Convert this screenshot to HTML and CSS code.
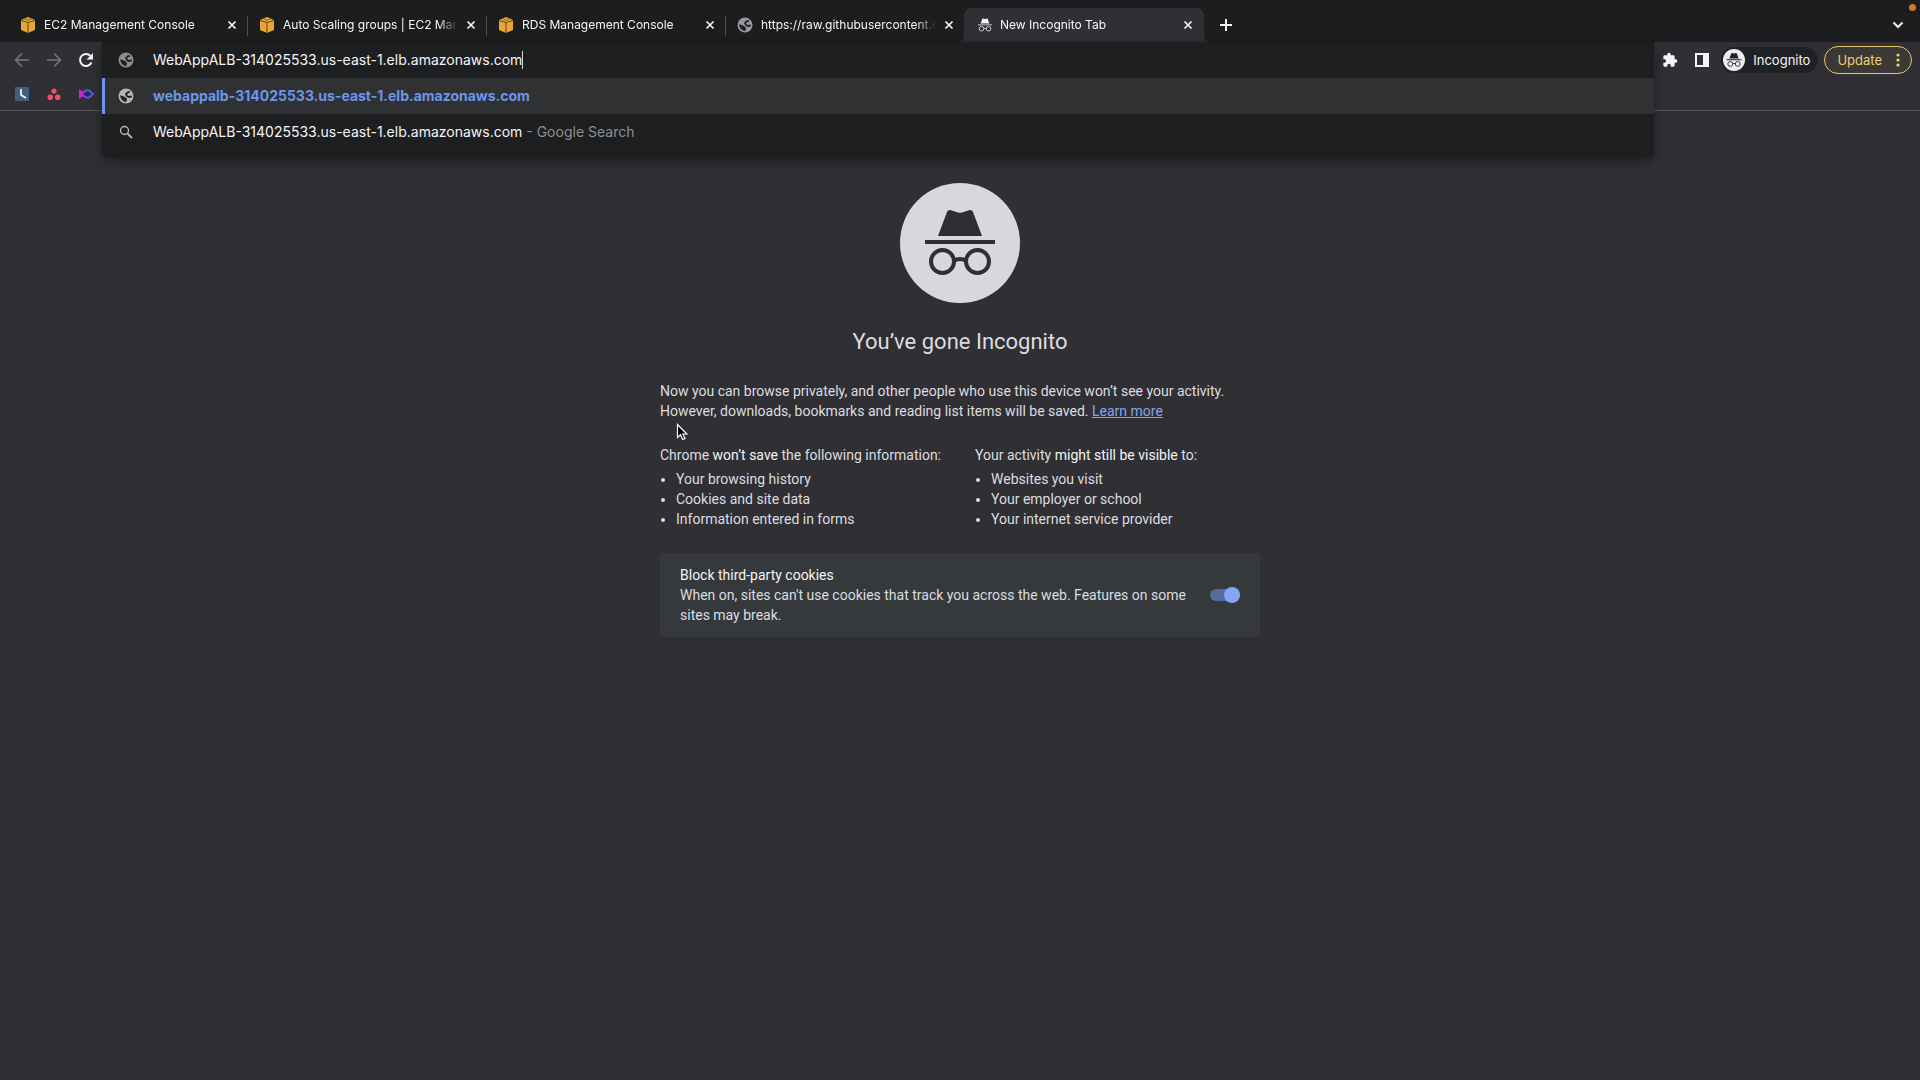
FILE: index.html
```html
<!DOCTYPE html>
<html lang="en">
<head>
<meta charset="utf-8">
<title>New Incognito Tab</title>
<link rel="stylesheet" href="styles.css">
</head>
<body>
<svg class="defs" aria-hidden="true">
  <symbol id="cube" viewBox="0 0 16 16">
    <path fill="#e8a636" d="M1 3l7-3 7 3v10l-7 3-7-3z"/>
    <path fill="none" stroke="#4a3414" stroke-width="1" d="M1 3.500l7 2 7-2M8 5.500V16" opacity=".85"/>
    <path fill="none" stroke="#7a5620" stroke-width=".8" d="M4 1.600l4 1.600 4-1.600"/>
  </symbol>
  <symbol id="globe" viewBox="0 0 16 16">
    <circle cx="8" cy="8" r="7.500" fill="currentColor"/>
    <path fill="none" stroke="#1e1f21" stroke-width="1.800" d="M11.800 3.600L9.600 4.400 8 6.200 9.200 8.300 11.200 9l2.600-.6"/>
    <path fill="#1e1f21" d="M2 7.200l4.600 1.600 2.400 2-.6 3.300Q3 13.500 2 7.200z"/>
  </symbol>
  <symbol id="close" viewBox="0 0 10 10">
    <path d="M1.500 1.500l7 7M8.500 1.500l-7 7" stroke="currentColor" stroke-width="1.700"/>
  </symbol>
  <symbol id="spy" viewBox="0 0 70 66">
    <path fill="currentColor" d="M13 26L22 2Q23 -.5 26 .3L33 2.500Q35 3 37 2.500L44 .3Q47 -.5 48 2L57 26zM0 30h70v4H0z"/>
    <g fill="none" stroke="currentColor" stroke-width="4"><circle cx="17.500" cy="51.500" r="11.500"/><circle cx="52.500" cy="51.500" r="11.500"/><path d="M28.500 51Q35 47 41.500 51"/></g>
  </symbol>
</svg>

<header class="browser">
  <nav class="tabs" aria-label="Tabs">
    <div class="tab"><svg class="icon"><use href="#cube"/></svg><span class="title">EC2 Management Console</span><button class="close" aria-label="Close tab"><svg><use href="#close"/></svg></button></div>
    <div class="tab"><svg class="icon"><use href="#cube"/></svg><span class="title">Auto Scaling groups | EC2 Management</span><button class="close" aria-label="Close tab"><svg><use href="#close"/></svg></button></div>
    <div class="tab"><svg class="icon"><use href="#cube"/></svg><span class="title">RDS Management Console</span><button class="close" aria-label="Close tab"><svg><use href="#close"/></svg></button></div>
    <div class="tab last"><svg class="icon muted"><use href="#globe"/></svg><span class="title">https://raw.githubusercontent.com</span><button class="close" aria-label="Close tab"><svg><use href="#close"/></svg></button></div>
    <div class="tab active"><svg class="icon spy"><use href="#spy"/></svg><span class="title">New Incognito Tab</span><button class="close" aria-label="Close tab"><svg><use href="#close"/></svg></button></div>
    <button class="new-tab" aria-label="New tab"><svg viewBox="0 0 14 14"><path d="M7 1v12M1 7h12" stroke="currentColor" stroke-width="2"/></svg></button>
    <button class="tab-search" aria-label="Search tabs"><svg viewBox="0 0 12 8"><path d="M1.500 1.500L6 6l4.500-4.500" fill="none" stroke="currentColor" stroke-width="2"/></svg></button>
    <span class="recording"></span>
  </nav>

  <div class="chrome">
    <div class="left">
      <div class="row nav">
        <button class="dim" aria-label="Back"><svg viewBox="0 0 16 16"><path d="M15 8H2M8 1.500L1.500 8 8 14.500" fill="none" stroke="currentColor" stroke-width="1.600"/></svg></button>
        <button class="dim" aria-label="Forward"><svg viewBox="0 0 16 16"><path d="M1 8h13M8 1.500L14.500 8 8 14.500" fill="none" stroke="currentColor" stroke-width="1.600"/></svg></button>
        <button aria-label="Reload"><svg viewBox="0 0 16 16"><path d="M13.500 10.500A6 6 0 1 1 12.400 3.800" fill="none" stroke="currentColor" stroke-width="2"/><path d="M15 1v6.500H8.500z" fill="currentColor"/></svg></button>
      </div>
      <div class="row marks">
        <a href="#" aria-label="Clock"><svg viewBox="0 0 16 16"><rect x="1" y="1" width="14" height="14" rx="1" fill="#40607f"/><path d="M7 3v6l5 3" fill="none" stroke="#fff" stroke-width="1.600"/></svg></a>
        <a href="#" aria-label="Asana"><svg viewBox="0 0 16 16" fill="#e8526a"><circle cx="8" cy="5" r="2.600"/><circle cx="4.300" cy="11.300" r="2.800"/><circle cx="11.700" cy="11.300" r="2.800"/></svg></a>
        <a href="#" aria-label="Fish"><svg viewBox="0 0 16 16"><path d="M4 8Q7.500 3.500 11 4.500L15 8 11 11.500Q7.500 12.500 4 8z" fill="#2b2550" stroke="#4c59e6" stroke-width="2"/><path d="M1 3l3.500 2.500L8 4 5 8l3 4-3.500-1.500L1 13z" fill="#c522dc"/></svg></a>
      </div>
    </div>

    <form class="omnibox">
      <div class="panel">
        <label class="line"><svg class="icon muted"><use href="#globe"/></svg>
          <span class="field"><input type="text" aria-label="Address" value="WebAppALB-314025533.us-east-1.elb.amazonaws.com"><span class="caret"></span></span>
        </label>
        <a class="line selected" href="#"><svg class="icon"><use href="#globe"/></svg><b>webappalb-314025533.us-east-1.elb.amazonaws.com</b></a>
        <a class="line" href="#"><svg class="icon" viewBox="0 0 16 16"><path d="M9.500 9.500l4.500 4.500" stroke="currentColor" stroke-width="1.800"/><circle cx="6.500" cy="6.500" r="4" fill="none" stroke="currentColor" stroke-width="1.400"/></svg><span>WebAppALB-314025533.us-east-1.elb.amazonaws.com <span class="hint">- Google Search</span></span></a>
      </div>
    </form>

    <div class="row actions">
      <button aria-label="Extensions"><svg viewBox="0 0 24 24"><path fill="currentColor" d="M20.500 11H19V7a2 2 0 0 0-2-2h-4V3.500a2.500 2.500 0 0 0-5 0V5H4a2 2 0 0 0-2 2v3.800h1.500a2.700 2.700 0 0 1 0 5.400H2V20a2 2 0 0 0 2 2h3.800v-1.500a2.700 2.700 0 0 1 5.400 0V22H17a2 2 0 0 0 2-2v-4h1.500a2.500 2.500 0 0 0 0-5z"/></svg></button>
      <button aria-label="Side panel"><svg viewBox="0 0 16 16"><path fill="currentColor" fill-rule="evenodd" d="M1 1h14v14H1zM3 3v10h6V3z"/></svg></button>
      <button class="profile"><span class="badge"><svg><use href="#spy"/></svg></span>Incognito</button>
      <button class="update">Update<svg viewBox="0 0 4 16" fill="currentColor"><circle cx="2" cy="3" r="1.600"/><circle cx="2" cy="8" r="1.600"/><circle cx="2" cy="13" r="1.600"/></svg></button>
    </div>
  </div>
</header>

<main class="page">
  <div class="hero"><svg><use href="#spy"/></svg></div>
  <h1>You’ve gone Incognito</h1>
  <p>Now you can browse privately, and other people who use this device won’t see your activity. However, downloads, bookmarks and reading list items will be saved. <a href="#">Learn more</a></p>
  <div class="lists">
    <section>Chrome <em>won’t save</em> the following information:
      <ul><li>Your browsing history</li><li>Cookies and site data</li><li>Information entered in forms</li></ul>
    </section>
    <section>Your activity <em>might still be visible</em> to:
      <ul><li>Websites you visit</li><li>Your employer or school</li><li>Your internet service provider</li></ul>
    </section>
  </div>
  <label class="cookies">
    <span><em>Block third-party cookies</em><br>When on, sites can't use cookies that track you across the web. Features on some sites may break.</span>
    <input type="checkbox" role="switch" checked>
  </label>
  <svg class="pointer" viewBox="0 0 12 18"><path d="M1.500 1.500v13l3-2.700 2.200 4.700 2.300-1-2.200-4.500h4z" fill="#000" stroke="#fff" stroke-width="1.200"/></svg>
</main>
</body>
</html>
```
FILE: styles.css
```css
* { box-sizing: border-box; }
body { margin: 0; min-height: 100vh; background: #302f33; color: #dcdde0; font: 14px/20px Roboto, sans-serif; }
button { display: flex; align-items: center; padding: 0; border: 0; background: none; color: inherit; font: inherit; }
a { color: inherit; text-decoration: none; }
em { font-style: normal; color: #f4f4f6; }
svg { display: block; flex: none; }
.defs { position: absolute; width: 0; height: 0; }
.icon { width: 16px; height: 16px; }
.muted { color: #96989b; }

.browser { color: #f5f5f7; font-family: Inter, sans-serif; }
.tabs { position: relative; display: flex; height: 42px; padding: 8px 16px 0 8px; background: #1c1d1f; font-size: 12px; }
.tab { position: relative; display: flex; align-items: center; gap: 8px; flex: 0 1 239px; min-width: 0; padding: 0 10px 0 12px; }
.tab:not(.last, .active)::after { content: ""; position: absolute; right: -1px; top: 8px; width: 1px; height: 20px; background: #4d4e51; }
.title { flex: 1; overflow: hidden; white-space: nowrap; mask-image: linear-gradient(to right, #000 calc(100% - 20px), transparent); }
.close svg { width: 10px; height: 10px; }
.tab.active { flex-basis: 240px; padding: 0 11px 0 14px; border-radius: 8px 8px 0 0; background: #302f33; }
.tab.active::before, .tab.active::after { content: ""; position: absolute; bottom: 0; width: 6px; height: 6px; }
.tab.active::before { right: 100%; background: radial-gradient(circle at 0 0, transparent 6px, #302f33 6px); }
.tab.active::after { left: 100%; background: radial-gradient(circle at 100% 0, transparent 6px, #302f33 6px); }
.spy { width: 14px; height: 14px; }
.new-tab { margin-left: 15px; }
.new-tab svg { width: 14px; height: 14px; }
.tab-search { margin-left: auto; }
.tab-search svg { width: 12px; height: 8px; }
.recording { position: absolute; top: 4px; right: 4px; width: 7px; height: 7px; border-radius: 50%; background: #d07a2b; }

.chrome { display: flex; height: 69px; border-bottom: 1px solid #58585c; background: #302f33; }
.row { display: flex; align-items: center; height: 36px; }
.left { width: 102px; padding-left: 14px; }
.left .row { gap: 16px; }
.left svg { width: 16px; height: 16px; }
.marks { height: 32px; }
.dim { color: #77777b; }
.omnibox { position: relative; flex: 1; min-width: 0; }
.panel { position: absolute; z-index: 1; top: 0; left: 0; right: 0; padding-bottom: 7px; border-radius: 0 0 6px 6px; background: #1d1e20; box-shadow: 0 4px 12px #0006; font-size: 14px; }
.line { display: flex; align-items: center; gap: 19px; height: 36px; padding-left: 16px; border-left: 0 solid #6e93ef; white-space: nowrap; }
.line .icon { color: #b4b6b8; }
.line .icon.muted { color: #8b8d90; }
.line.selected { border-left-width: 3px; padding-left: 13px; background: #303133; color: #6c96e8; }
.hint { color: #8d8f92; }
.field { display: flex; align-items: center; flex: 1; }
.field input { field-sizing: content; padding: 0; border: 0; outline: 0; background: none; color: inherit; font: inherit; }
.caret { width: 1px; height: 18px; background: #d8d8da; }
.actions { padding: 0 8px; font-size: 13px; }
.actions > button > svg { width: 16px; height: 16px; }
.actions > button:first-child { margin-right: 16px; }
.profile { gap: 8px; height: 26px; margin-left: 11px; padding: 0 8px 0 2px; border-radius: 13px; background: #202124; }
.badge { display: grid; place-items: center; width: 22px; height: 22px; border-radius: 50%; background: #ededf0; color: #202124; }
.badge svg { width: 16px; height: 14px; }
.actions .update { gap: 14px; height: 28px; margin-left: 6px; padding: 0 11px 0 12px; border: 1px solid #e5c765; border-radius: 14px; background: #3b3934; color: #edcf6d; }
.actions .update svg { width: 4px; }

.page { position: relative; width: 600px; max-width: 100%; margin: 72px auto 0; }
.hero { display: grid; place-items: center; width: 120px; height: 120px; margin: 0 auto; border-radius: 50%; background: #d7d8dd; color: #2f2e33; }
.hero svg { width: 70px; height: 66px; }
h1 { margin: 24px 0; font-size: 22px; line-height: 30px; font-weight: 400; text-align: center; }
p { margin: 0; }
p a { color: #83a5ee; text-decoration: underline; }
.lists { display: flex; gap: 34px; margin: 24px 0; }
ul { margin: 4px 0 0; padding-left: 16px; }
.cookies { display: flex; align-items: center; gap: 20px; padding: 12px 20px; border-radius: 4px; background: #35393b; }
.cookies span { flex: 1; }
.cookies input { appearance: none; position: relative; width: 30px; height: 12px; margin: 0; border-radius: 6px; background: #566a9d; }
.cookies input::after { content: ""; position: absolute; top: -2px; right: 0; width: 16px; height: 16px; border-radius: 50%; background: #83a7f5; }
.pointer { position: absolute; top: 240px; left: 16px; width: 12px; height: 18px; }
```
